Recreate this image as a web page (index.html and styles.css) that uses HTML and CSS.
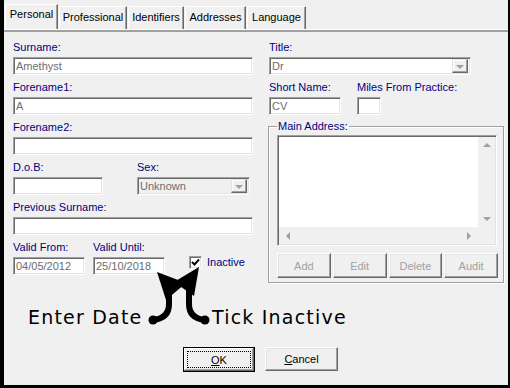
FILE: index.html
```html
<!DOCTYPE html>
<html lang="en">
<head>
  <meta charset="UTF-8">
  <title>Personal Details</title>
  <link rel="stylesheet" href="styles.css">
</head>
<body>
  <div class="window">
    <div class="tabs">
      <div class="tab active tab-personal">Personal</div>
      <div class="tab tab-professional">Professional</div>
      <div class="tab tab-identifiers">Identifiers</div>
      <div class="tab tab-addresses">Addresses</div>
      <div class="tab tab-language">Language</div>
    </div>

    <div class="panel">
      <div class="form">
        <!-- left column -->
        <div class="stack">
          <div class="field">
            <label>Surname:</label>
            <div class="edit">Amethyst</div>
          </div>
          <div class="field">
            <label>Forename1:</label>
            <div class="edit">A</div>
          </div>
          <div class="field">
            <label>Forename2:</label>
            <div class="edit"></div>
          </div>
          <div class="row">
            <div class="field field-dob">
              <label>D.o.B:</label>
              <div class="edit edit-dob"></div>
            </div>
            <div class="field">
              <label>Sex:</label>
              <div class="edit combo combo-sex disabled">
                <span class="combo-value">Unknown</span>
                <span class="drop"></span>
              </div>
            </div>
          </div>
          <div class="field">
            <label>Previous Surname:</label>
            <div class="edit"></div>
          </div>
          <div class="row">
            <div class="field field-date">
              <label>Valid From:</label>
              <div class="edit edit-date">04/05/2012</div>
            </div>
            <div class="field field-date">
              <label>Valid Until:</label>
              <div class="edit edit-date">25/10/2018</div>
            </div>
            <div class="checkline">
              <span class="check">
                <svg width="9" height="9" viewBox="0 0 9 9"><path d="M1 4 L3.5 6.5 L8 1.5" fill="none" stroke="#000" stroke-width="2"/></svg>
              </span>
              <span class="check-label">Inactive</span>
            </div>
          </div>
        </div>

        <!-- right column -->
        <div class="stack">
          <div class="field">
            <label>Title:</label>
            <div class="edit combo combo-title">
              <span class="combo-value">Dr</span>
              <span class="drop"></span>
            </div>
          </div>
          <div class="row">
            <div class="field field-short">
              <label>Short Name:</label>
              <div class="edit edit-short">CV</div>
            </div>
            <div class="field">
              <label>Miles From Practice:</label>
              <div class="edit edit-miles"></div>
            </div>
          </div>
          <fieldset class="group">
            <legend>Main Address:</legend>
            <div class="listbox">
              <div class="list-body"></div>
              <div class="vscroll">
                <span class="arrow arrow-up"></span>
                <span class="arrow arrow-down"></span>
              </div>
              <div class="hscroll">
                <span class="arrow arrow-left"></span>
                <span class="arrow arrow-right"></span>
              </div>
              <div class="corner"></div>
            </div>
            <div class="addr-buttons">
              <div class="btn disabled">Add</div>
              <div class="btn disabled">Edit</div>
              <div class="btn disabled">Delete</div>
              <div class="btn disabled">Audit</div>
            </div>
          </fieldset>
        </div>
      </div>

      <div class="notes">
        <span class="note note-date">Enter Date</span>
        <span class="note">Tick Inactive</span>
      </div>

      <div class="actions">
        <div class="btn btn-default"><span class="focus"><u>O</u>K</span></div>
        <div class="btn btn-cancel"><u>C</u>ancel</div>
      </div>
    </div>

    <svg class="arrows" width="504" height="385" viewBox="4 0 504 385">
      <path d="M153 320 C 163 319, 169 314, 169 304 L 169 291" fill="none" stroke="#000" stroke-width="6" stroke-linecap="round"/>
      <path d="M205 320 C 195 319, 189 314, 189 304 L 189 289" fill="none" stroke="#000" stroke-width="6" stroke-linecap="round"/>
      <polygon points="157,272 186,283 166,300" fill="#000"/>
      <polygon points="199,267 174,282 194,296" fill="#000"/>
      <circle cx="153" cy="320" r="4.5" fill="#000"/>
      <circle cx="205" cy="320" r="4.5" fill="#000"/>
    </svg>
  </div>
</body>
</html>
```

FILE: styles.css
```css
body {
  margin: 0;
  background: #f0f0f0;
  font-family: "Liberation Sans", Arial, sans-serif;
  font-size: 11px;
  color: #000;
}
.window {
  position: relative;
  width: 510px;
  height: 388px;
  box-sizing: border-box;
  border-left: 4px solid #000;
  border-right: 2px solid #000;
  border-bottom: 3px solid #000;
  display: flex;
  flex-direction: column;
}

/* tab strip */
.tabs {
  display: flex;
  align-items: flex-end;
  gap: 1px;
  height: 29px;
  padding-left: 1px;
}
.tab {
  height: 23px;
  box-sizing: border-box;
  border-top: 1px solid #fff;
  border-left: 1px solid #fff;
  border-right: 1px solid #696969;
  box-shadow: inset -1px 0 #a0a0a0;
  text-align: center;
  line-height: 20px;
}
.tab.active { height: 25px; line-height: 19px; }
.tab-personal { width: 53px; }
.tab-professional { width: 68px; }
.tab-identifiers { width: 56px; }
.tab-addresses { width: 61px; }
.tab-language { width: 59px; }

.panel {
  flex: 1;
  display: flex;
  flex-direction: column;
  box-shadow: inset 0 1px #fff, inset 0 3px #a0a0a0;
}
.form {
  display: grid;
  grid-template-columns: 240px 235px;
  column-gap: 16px;
  padding: 11px 0 0 9px;
  align-items: start;
}
.stack {
  display: flex;
  flex-direction: column;
  gap: 5px;
}
.row { display: flex; align-items: flex-start; }
.field {
  display: flex;
  flex-direction: column;
}
.field label {
  color: #000080;
  height: 14px;
  line-height: 14px;
  margin-bottom: 3px;
  white-space: nowrap;
}

/* sunken edit box */
.edit {
  height: 18px;
  box-sizing: border-box;
  background: #fff;
  border-top: 1px solid #a0a0a0;
  border-left: 1px solid #a0a0a0;
  border-right: 1px solid #fff;
  border-bottom: 1px solid #fff;
  box-shadow: inset 1px 1px #696969, inset -1px -1px #e3e3e3;
  color: #6d6d6d;
  padding-left: 2px;
  line-height: 16px;
  white-space: nowrap;
}
.field-dob { width: 124px; }
.edit-dob { width: 90px; }
.field-date { width: 80px; }
.edit-date { width: 72px; }
.field-short { width: 88px; }
.edit-short { width: 72px; }
.edit-miles { width: 24px; }

.combo {
  display: flex;
  align-items: center;
  justify-content: space-between;
  padding-right: 2px;
}
.combo-title { width: 202px; }
.combo-sex { width: 113px; }
.combo.disabled { background: #f0f0f0; }
.drop {
  width: 16px;
  height: 14px;
  box-sizing: border-box;
  border-top: 1px solid #e3e3e3;
  border-left: 1px solid #e3e3e3;
  border-right: 1px solid #696969;
  border-bottom: 1px solid #696969;
  box-shadow: inset -1px -1px #a0a0a0, inset 1px 1px #fff;
  background: #f0f0f0;
  display: flex;
  align-items: center;
  justify-content: center;
}
.drop::after {
  content: "";
  border-left: 4px solid transparent;
  border-right: 4px solid transparent;
  border-top: 4px solid #a0a0a0;
  margin-top: 1px;
}

/* checkbox */
.checkline {
  display: flex;
  align-items: center;
  gap: 5px;
  margin: 16px 0 0 16px;
}
.check {
  width: 13px;
  height: 13px;
  box-sizing: border-box;
  background: #fff;
  border-top: 1px solid #a0a0a0;
  border-left: 1px solid #a0a0a0;
  border-right: 1px solid #fff;
  border-bottom: 1px solid #fff;
  box-shadow: inset 1px 1px #696969, inset -1px -1px #e3e3e3;
  display: flex;
  align-items: center;
  justify-content: center;
}
.check-label { color: #000080; margin-top: -1px; }

/* main address group */
.group {
  margin: 0 0 0 -1px;
  padding: 2px 5px 4px 8px;
  border: 1px solid #a0a0a0;
  box-shadow: inset 1px 1px #fff, 1px 1px #fff;
  min-width: 0;
}
.group legend {
  color: #000080;
  padding: 0 1px;
  line-height: 13px;
}
.listbox {
  width: 220px;
  height: 111px;
  box-sizing: border-box;
  border-top: 1px solid #a0a0a0;
  border-left: 1px solid #a0a0a0;
  border-right: 1px solid #fff;
  border-bottom: 1px solid #fff;
  box-shadow: inset 1px 1px #696969, inset -1px -1px #e3e3e3;
  padding: 1px;
  display: grid;
  grid-template-columns: 1fr 17px;
  grid-template-rows: 1fr 17px;
}
.list-body { background: #fff; }
.vscroll, .hscroll, .corner { background: #f0f0f0; }
.vscroll {
  display: flex;
  flex-direction: column;
  justify-content: space-between;
  align-items: center;
  padding: 6px 0;
}
.hscroll {
  display: flex;
  justify-content: space-between;
  align-items: center;
  padding: 0 7px;
}
.arrow { width: 0; height: 0; }
.arrow-up {
  border-left: 4px solid transparent;
  border-right: 4px solid transparent;
  border-bottom: 4px solid #a0a0a0;
}
.arrow-down {
  border-left: 4px solid transparent;
  border-right: 4px solid transparent;
  border-top: 4px solid #a0a0a0;
}
.arrow-left {
  border-top: 4px solid transparent;
  border-bottom: 4px solid transparent;
  border-right: 4px solid #a0a0a0;
}
.arrow-right {
  border-top: 4px solid transparent;
  border-bottom: 4px solid transparent;
  border-left: 4px solid #a0a0a0;
}
.addr-buttons {
  display: flex;
  gap: 2px;
  margin-top: 7px;
}

/* raised buttons */
.btn {
  box-sizing: border-box;
  background: #f0f0f0;
  border-top: 1px solid #fff;
  border-left: 1px solid #fff;
  border-right: 1px solid #696969;
  border-bottom: 1px solid #696969;
  box-shadow: inset -1px -1px #a0a0a0, inset 1px 1px #e3e3e3;
  display: flex;
  align-items: center;
  justify-content: center;
}
.addr-buttons .btn { width: 54px; height: 25px; }
.btn.disabled { color: #a0a0a0; }

/* annotation */
.notes {
  display: flex;
  margin-top: 22px;
  padding-left: 24px;
  height: 24px;
}
.note {
  font-family: "DejaVu Sans", sans-serif;
  font-size: 19px;
  letter-spacing: 1.2px;
  line-height: 24px;
}
.note-date { width: 184px; }

.actions {
  display: flex;
  gap: 10px;
  padding-left: 179px;
  margin-top: 18px;
}
.btn-default {
  width: 72px;
  height: 25px;
  border: 1px solid #000;
  box-shadow: inset -1px -1px #696969, inset 1px 1px #fff, inset -2px -2px #a0a0a0;
  padding: 3px;
}
.focus {
  flex: 1;
  align-self: stretch;
  border: 1px dotted #000;
  display: flex;
  align-items: center;
  justify-content: center;
}
.btn-cancel { width: 73px; height: 24px; }

.arrows {
  position: absolute;
  left: 0;
  top: 0;
  pointer-events: none;
}
```
